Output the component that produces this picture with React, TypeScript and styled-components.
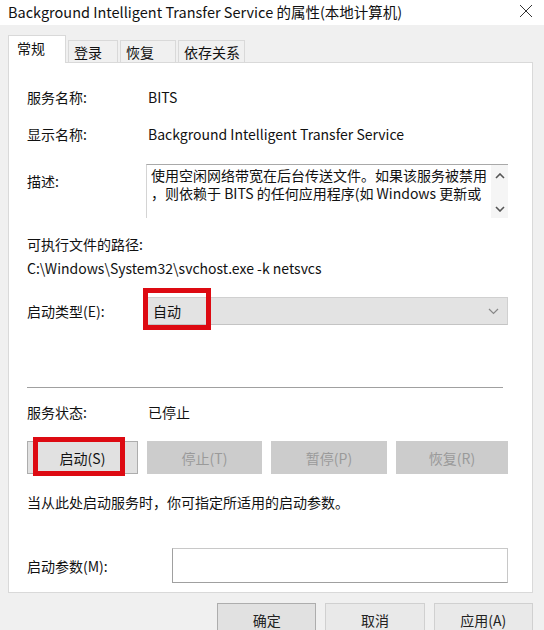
import React from "react";
import styled, { createGlobalStyle } from "styled-components";

const GlobalStyle = createGlobalStyle`
  html, body {
    margin: 0;
    padding: 0;
    background: #f0f0f0;
  }
  * {
    box-sizing: border-box;
  }
`;

const FONT = `"Noto Sans CJK SC", "Noto Sans", sans-serif`;

const tabs = [
  { label: "常规", width: 58 },
  { label: "登录", width: 50 },
  { label: "恢复", width: 56 },
  { label: "依存关系", width: 67 },
];
const actions = [
  { label: "启动(S)", enabled: true, marked: true },
  { label: "停止(T)", enabled: false },
  { label: "暂停(P)", enabled: false },
  { label: "恢复(R)", enabled: false },
];

const App: React.FC = () => {
  return (
    <>
      <GlobalStyle />
      <Window>
        <TitleBar>
          <span>Background Intelligent Transfer Service 的属性(本地计算机)</span>
          <CloseButton>
            <svg width="14" height="14" viewBox="0 0 14 14">
              <path d="M1 1 L13 13 M13 1 L1 13" stroke="#333" strokeWidth="1" />
            </svg>
          </CloseButton>
        </TitleBar>

        <Body>
          <TabStrip>
            {tabs.map((t, i) => (
              <Tab key={t.label} $active={i === 0} $width={t.width}>
                {t.label}
              </Tab>
            ))}
          </TabStrip>

          <Panel>
            <InfoRow $mt={24}>
              <Label>服务名称:</Label>
              <Value>BITS</Value>
            </InfoRow>
            <InfoRow $mt={17}>
              <Label>显示名称:</Label>
              <Value>Background Intelligent Transfer Service</Value>
            </InfoRow>

            <DescRow>
              <Label $pt={7}>描述:</Label>
              <DescBox>
                <DescText>
                  <DescLine>使用空闲网络带宽在后台传送文件。如果该服务被禁用</DescLine>
                  <DescLine>，则依赖于 BITS 的任何应用程序(如 Windows 更新或</DescLine>
                </DescText>
                <ScrollBar>
                  <svg width="10" height="6" viewBox="0 0 10 6">
                    <path d="M1 5 L5 1 L9 5" fill="none" stroke="#555" strokeWidth="1.6" />
                  </svg>
                  <svg width="10" height="6" viewBox="0 0 10 6">
                    <path d="M1 1 L5 5 L9 1" fill="none" stroke="#555" strokeWidth="1.6" />
                  </svg>
                </ScrollBar>
              </DescBox>
            </DescRow>

            <PlainText $mt={16}>可执行文件的路径:</PlainText>
            <PlainText $mt={4}>C:\Windows\System32\svchost.exe -k netsvcs</PlainText>

            <SelectRow>
              <Label>启动类型(E):</Label>
              <Select>
                <span>自动</span>
                <svg width="11" height="7" viewBox="0 0 11 7">
                  <path d="M1 1 L5.5 5.5 L10 1" fill="none" stroke="#888" strokeWidth="1.2" />
                </svg>
                <Mark $left={-5} $top={-10} $width={68} $height={42} />
              </Select>
            </SelectRow>

            <Separator />

            <InfoRow $mt={14}>
              <Label>服务状态:</Label>
              <Value>已停止</Value>
            </InfoRow>

            <ActionGrid>
              {actions.map((a) => (
                <ActionButton key={a.label} $enabled={a.enabled}>
                  {a.label}
                  {a.marked && <Mark $left={5} $top={-5} $width={92} $height={39} />}
                </ActionButton>
              ))}
            </ActionGrid>

            <PlainText $mt={18}>当从此处启动服务时，你可指定所适用的启动参数。</PlainText>

            <ParamRow>
              <Label $w={145}>启动参数(M):</Label>
              <ParamInput />
            </ParamRow>
          </Panel>

          <Footer>
            <DialogButton>确定</DialogButton>
            <DialogButton $light>取消</DialogButton>
            <DialogButton $light>应用(A)</DialogButton>
          </Footer>
        </Body>
      </Window>
    </>
  );
};

const Window = styled.div`
  width: 544px;
  height: 630px;
  overflow: hidden;
  background: #f0f0f0;
  font-family: ${FONT};
  color: #111;
  font-size: 14px;
`;

const TitleBar = styled.div`
  height: 25px;
  background: #ffffff;
  display: flex;
  align-items: center;
  justify-content: space-between;
  padding: 0 11px 2px 8px;
  font-size: 14.5px;
  color: #111;
`;

const CloseButton = styled.div`
  display: flex;
  align-items: center;
  margin-top: -2px;
`;

const Body = styled.div`
  padding: 10px 11px 0 8px;
`;

const TabStrip = styled.div`
  display: flex;
  align-items: flex-end;
  gap: 2px;
  height: 28px;
  margin-bottom: -1px;
  position: relative;
  z-index: 1;
`;

const Tab = styled.div<{ $active?: boolean; $width: number }>`
  width: ${(p) => p.$width}px;
  height: ${(p) => (p.$active ? 28 : 23)}px;
  padding: 0 0 ${(p) => (p.$active ? 4 : 0)}px ${(p) => (p.$active ? 8 : 5)}px;
  display: flex;
  align-items: center;
  background: ${(p) => (p.$active ? "#ffffff" : "#f0f0f0")};
  border: 1px solid #d9d9d9;
  border-bottom: ${(p) => (p.$active ? "none" : "1px solid #d9d9d9")};
`;

const Panel = styled.div`
  height: 531px;
  background: #ffffff;
  border: 1px solid #d9d9d9;
  padding: 0 24px 0 18px;
  display: flex;
  flex-direction: column;
`;

const InfoRow = styled.div<{ $mt: number }>`
  display: flex;
  align-items: center;
  height: 20px;
  margin-top: ${(p) => p.$mt}px;
`;

const Label = styled.div<{ $pt?: number; $w?: number }>`
  width: ${(p) => p.$w ?? 121}px;
  flex-shrink: 0;
  padding-top: ${(p) => p.$pt ?? 0}px;
  line-height: 20px;
`;

const Value = styled.div`
  line-height: 20px;
`;

const DescRow = styled.div`
  display: flex;
  align-items: flex-start;
  margin-top: 20px;
`;

const DescBox = styled.div`
  width: 362px;
  margin-left: -2px;
  height: 54px;
  display: flex;
  border-top: 1px solid #a9a9a9;
  border-left: 1px solid #d4d4d4;
`;

const DescText = styled.div`
  flex: 1;
  padding: 1px 0 0 4px;
  font-size: 14px;
`;

const DescLine = styled.div`
  height: 18px;
  line-height: 18px;
  white-space: nowrap;
`;

const ScrollBar = styled.div`
  width: 17px;
  background: #f5f5f5;
  display: flex;
  flex-direction: column;
  align-items: center;
  justify-content: space-between;
  padding: 8px 0 6px;
`;

const PlainText = styled.div<{ $mt: number }>`
  line-height: 20px;
  margin-top: ${(p) => p.$mt}px;
`;

const SelectRow = styled.div`
  display: flex;
  align-items: center;
  margin-top: 19px;
`;

const Select = styled.div`
  position: relative;
  width: 362px;
  height: 28px;
  margin-left: -1px;
  background: #e3e3e3;
  border: 1px solid #d0d0d0;
  border-bottom-color: #c4c4c4;
  display: flex;
  align-items: center;
  justify-content: space-between;
  padding: 0 8px 0 5px;
`;

const Mark = styled.div<{ $left: number; $top: number; $width: number; $height: number }>`
  position: absolute;
  left: ${(p) => p.$left}px;
  top: ${(p) => p.$top}px;
  width: ${(p) => p.$width}px;
  height: ${(p) => p.$height}px;
  border: 5px solid #dd0a12;
  pointer-events: none;
`;

const Separator = styled.div`
  height: 1px;
  background: #a0a0a0;
  margin: 62px 4px 0 0;
  width: 476px;
`;

const ActionGrid = styled.div`
  display: grid;
  grid-template-columns: 111px 115px 116px 112px;
  column-gap: 9px;
  margin-top: 19px;
`;

const ActionButton = styled.div<{ $enabled: boolean }>`
  position: relative;
  height: 33px;
  display: flex;
  align-items: center;
  justify-content: center;
  background: ${(p) => (p.$enabled ? "#e1e1e1" : "#cccccc")};
  border: 1px solid ${(p) => (p.$enabled ? "#adadad" : "#cccccc")};
  color: ${(p) => (p.$enabled ? "#111" : "#9a9a9a")};
`;

const ParamRow = styled.div`
  display: flex;
  align-items: center;
  margin-top: 36px;
`;

const ParamInput = styled.div`
  width: 337px;
  height: 35px;
  background: #ffffff;
  border: 1px solid #a9a9a9;
  border-color: #c8c8c8 #c8c8c8 #a0a0a0 #a0a0a0;
`;

const Footer = styled.div`
  display: flex;
  gap: 9px;
  margin-top: 10px;
  padding-left: 209px;
`;

const DialogButton = styled.div<{ $light?: boolean }>`
  width: 102px;
  height: 33px;
  display: flex;
  align-items: center;
  justify-content: center;
  background: ${(p) => (p.$light ? "#e9e9e9" : "#e1e1e1")};
  border: 1px solid ${(p) => (p.$light ? "#d0d0d0" : "#adadad")};
  color: #222;
`;

export default App;
